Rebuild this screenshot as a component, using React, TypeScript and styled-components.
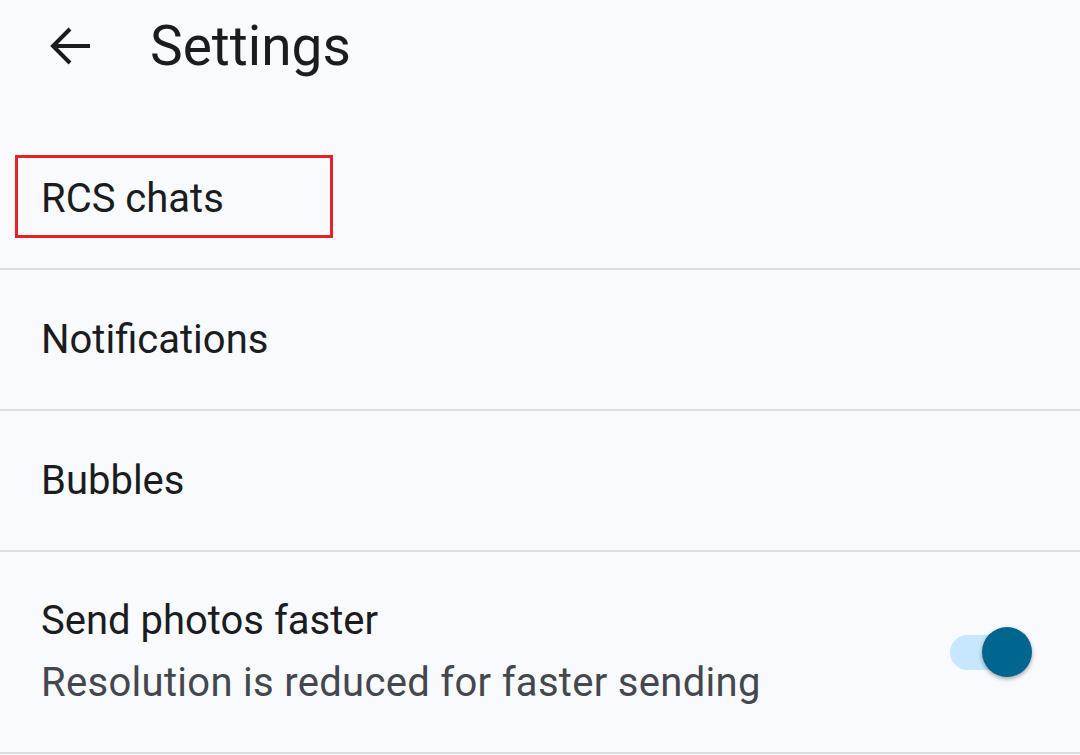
import React from "react";
import styled, { createGlobalStyle } from "styled-components";

const Global = createGlobalStyle`
  html, body { margin: 0; padding: 0; background: #f9fafe; }
  body { font-family: Roboto, "Noto Sans", sans-serif; -webkit-font-smoothing: antialiased; }
`;

const Page = styled.div`
  width: 1080px;
  height: 755px;
  background: #f9fafe;
  overflow: hidden;
  display: flex;
  flex-direction: column;
`;

const Header = styled.header`
  height: 92px;
  display: flex;
  align-items: center;
  padding-left: 50px;
  gap: 60px;
  margin-bottom: 37px;
`;

const BackButton = styled.button`
  border: 0;
  background: transparent;
  padding: 0;
  width: 40px;
  height: 40px;
  display: flex;
  align-items: center;
  justify-content: center;
  color: #1b1c1e;
`;

const Title = styled.h1`
  margin: 0;
  font-size: 55px;
  font-weight: 400;
  color: #1b1c1e;
  letter-spacing: 0;
`;

const List = styled.div`
  display: flex;
  flex-direction: column;
`;

const Row = styled.div<{ $tall?: boolean }>`
  position: relative;
  height: ${(p) => (p.$tall ? "200px" : "139px")};
  border-bottom: 2px solid #dcdde1;
  display: flex;
  align-items: center;
  justify-content: space-between;
  padding: 0 48px 0 41px;
`;

const Texts = styled.div`
  display: flex;
  flex-direction: column;
  gap: 14px;
`;

const Label = styled.div`
  font-size: 40px;
  color: #1b1c1e;
  line-height: 48px;
`;

const Sub = styled.div`
  font-size: 40px;
  color: #44474e;
  line-height: 48px;
  letter-spacing: 0.3px;
`;

const Highlight = styled.div`
  position: absolute;
  left: 15px;
  top: 26px;
  width: 318px;
  height: 83px;
  box-sizing: border-box;
  border: 3px solid #e8202a;
  pointer-events: none;
`;

const Switch = styled.div`
  position: relative;
  width: 82px;
  height: 52px;
  display: flex;
  align-items: center;
`;

const Track = styled.div`
  width: 62px;
  height: 35px;
  border-radius: 18px;
  background: #c6e7fe;
`;

const Thumb = styled.div`
  position: absolute;
  right: 0;
  top: 1px;
  width: 50px;
  height: 50px;
  border-radius: 50%;
  background: #00668f;
  box-shadow: 0 2px 4px rgba(0, 0, 0, 0.35);
`;

export default function App() {
  return (
    <Page>
      <Global />
      <Header>
        <BackButton aria-label="Back">
          <svg width="40" height="40" viewBox="0 0 40 40">
            <path
              d="M40 20H3M20 3L3 20L20 37"
              fill="none"
              stroke="currentColor"
              strokeWidth="4"
            />
          </svg>
        </BackButton>
        <Title>Settings</Title>
      </Header>
      <List>
        <Row>
          <Label>RCS chats</Label>
          <Highlight />
        </Row>
        <Row>
          <Label>Notifications</Label>
        </Row>
        <Row>
          <Label>Bubbles</Label>
        </Row>
        <Row $tall>
          <Texts>
            <Label>Send photos faster</Label>
            <Sub>Resolution is reduced for faster sending</Sub>
          </Texts>
          <Switch>
            <Track />
            <Thumb />
          </Switch>
        </Row>
      </List>
    </Page>
  );
}
